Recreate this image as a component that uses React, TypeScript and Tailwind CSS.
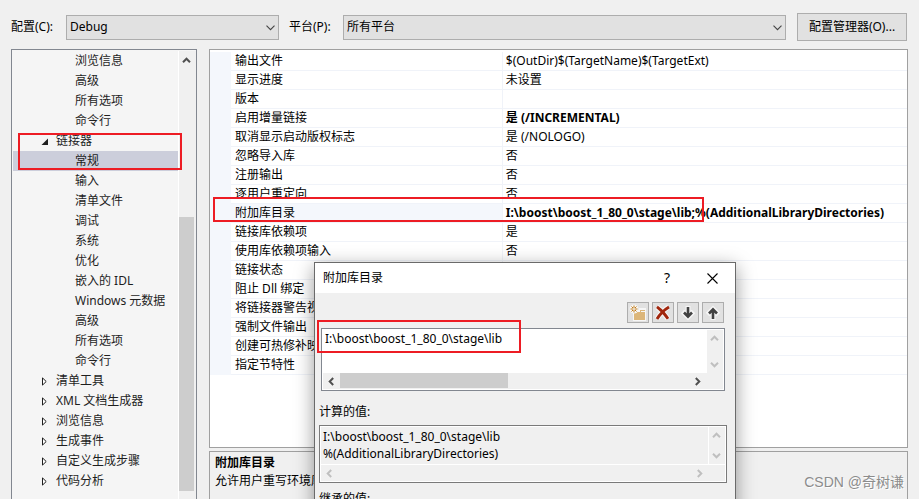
import React, { useState } from 'react';

type TreeNode = { label: string; level: 1 | 2; open?: boolean; selected?: boolean };

type Property = { name: string; value: string; changed?: boolean; selected?: boolean };

const treeNodes: TreeNode[] = [
  { label: '浏览信息', level: 2 },
  { label: '高级', level: 2 },
  { label: '所有选项', level: 2 },
  { label: '命令行', level: 2 },
  { label: '链接器', level: 1, open: true },
  { label: '常规', level: 2, selected: true },
  { label: '输入', level: 2 },
  { label: '清单文件', level: 2 },
  { label: '调试', level: 2 },
  { label: '系统', level: 2 },
  { label: '优化', level: 2 },
  { label: '嵌入的 IDL', level: 2 },
  { label: 'Windows 元数据', level: 2 },
  { label: '高级', level: 2 },
  { label: '所有选项', level: 2 },
  { label: '命令行', level: 2 },
  { label: '清单工具', level: 1 },
  { label: 'XML 文档生成器', level: 1 },
  { label: '浏览信息', level: 1 },
  { label: '生成事件', level: 1 },
  { label: '自定义生成步骤', level: 1 },
  { label: '代码分析', level: 1 },
];

const properties: Property[] = [
  { name: '输出文件', value: '$(OutDir)$(TargetName)$(TargetExt)' },
  { name: '显示进度', value: '未设置' },
  { name: '版本', value: '' },
  { name: '启用增量链接', value: '是 (/INCREMENTAL)', changed: true },
  { name: '取消显示启动版权标志', value: '是 (/NOLOGO)' },
  { name: '忽略导入库', value: '否' },
  { name: '注册输出', value: '否' },
  { name: '逐用户重定向', value: '否' },
  {
    name: '附加库目录',
    value: 'I:\\boost\\boost_1_80_0\\stage\\lib;%(AdditionalLibraryDirectories)',
    changed: true,
    selected: true,
  },
  { name: '链接库依赖项', value: '是' },
  { name: '使用库依赖项输入', value: '否' },
  { name: '链接状态', value: '' },
  { name: '阻止 Dll 绑定', value: '' },
  { name: '将链接器警告视为错误', value: '' },
  { name: '强制文件输出', value: '' },
  { name: '创建可热修补映像', value: '' },
  { name: '指定节特性', value: '' },
];

const turns = {
  up: '',
  down: 'rotate-180',
  left: '-rotate-90',
  right: 'rotate-90',
};

const ScrollArrow: React.FC<{ dir: keyof typeof turns; label: string; dim?: boolean; className?: string }> = ({
  dir,
  label,
  dim,
  className = '',
}) => (
  <button
    type="button"
    aria-label={label}
    className={`flex shrink-0 items-center justify-center ${dim ? 'text-[#bfbfbf]' : 'text-[#505050]'} ${className}`}
  >
    <svg width="9" height="9" viewBox="0 0 9 9" className={turns[dir]}>
      <path d="M1 6.2 4.5 2.7 8 6.2" fill="none" stroke="currentColor" strokeWidth="2" />
    </svg>
  </button>
);

const SelectBox: React.FC<{ id: string; value: string; className: string }> = ({ id, value, className }) => (
  <div className={`relative ${className}`}>
    <select
      id={id}
      defaultValue={value}
      className="h-[25px] w-full appearance-none border border-[#adadad] bg-[#e1e1e1] pr-6 pl-[3px] outline-none"
    >
      <option>{value}</option>
    </select>
    <svg width="9" height="6" viewBox="0 0 9 6" className="pointer-events-none absolute top-[10px] right-1">
      <path d="M.5.7 4.5 4.7 8.5.7" fill="none" stroke="#444" strokeWidth="1.1" />
    </svg>
  </div>
);

// Red frame that calls attention to a part of the window
const Marker: React.FC<{ className: string }> = ({ className }) => (
  <div className={`pointer-events-none absolute border-2 border-[#ed1c24] ${className}`}></div>
);

const ConfigTree: React.FC = () => (
  <div className="relative w-[186px] shrink-0 self-start border border-[#828790] bg-[#f5f5f5] p-px pr-0 text-[#1e1e1e]">
    <div className="flex">
      <ul role="tree" className="flex-1 pb-5">
        {treeNodes.map((node, i) => (
          <li
            key={i}
            role="treeitem"
            aria-selected={!!node.selected}
            className={`flex h-5 items-center whitespace-nowrap ${node.level === 1 ? 'pl-7' : 'pl-[62px]'} ${
              node.selected ? 'bg-[#cccedb]' : ''
            }`}
          >
            {node.level === 1 && (
              <svg width="8" height="9" viewBox="0 0 8 9" className="mr-[7px] shrink-0">
                {node.open ? (
                  <path d="M7 1.5V8H.5z" fill="#1e1e1e" />
                ) : (
                  <path d="M1.5.9V8.1L5.2 4.5z" fill="#fff" stroke="#1e1e1e" />
                )}
              </svg>
            )}
            {node.label}
          </li>
        ))}
      </ul>
      <div className="flex w-[18px] flex-col border-l border-white bg-[#f0f0f0]">
        <ScrollArrow dir="up" label="向上滚动" className="h-[18px] w-[15px]" />
        <div className="mt-[148px] w-[15px] flex-1 bg-[#cdcdcd]"></div>
        <ScrollArrow dir="down" label="向下滚动" className="h-5 w-[15px]" />
      </div>
    </div>
    <Marker className="top-[83px] right-[14px] left-[6px] h-[37px]" />
  </div>
);

const PropertyGrid: React.FC = () => (
  <div className="relative h-[399px] border border-[#a0a0a0] bg-white pt-0.5">
    <table className="w-full table-fixed border-separate border-spacing-0">
      <colgroup>
        <col className="w-[21px]" />
        <col className="w-[39%]" />
        <col />
      </colgroup>
      <tbody>
        {properties.map(p => (
          <tr key={p.name} className="h-[19px]">
            <td className="bg-[#f4f7fc] p-0"></td>
            <td
              className={`border-r border-b border-[#f0f3f9] p-0 pl-1 leading-[18px] whitespace-nowrap ${
                p.selected ? 'bg-[#f4f7fc]' : ''
              }`}
            >
              {p.name}
            </td>
            <td
              className={`border-b border-[#f0f3f9] p-0 pl-[3px] leading-[18px] whitespace-nowrap ${
                p.changed ? 'font-bold' : ''
              }`}
            >
              {p.value}
            </td>
          </tr>
        ))}
      </tbody>
    </table>
    <Marker className="top-[147px] right-[203px] left-[3px] h-[25px]" />
  </div>
);

const toolClass = 'flex h-[21px] w-[22px] items-center justify-center border border-[#adadad] bg-[#e1e1e1]';

const DirectoriesDialog: React.FC = () => {
  const [paths, setPaths] = useState('I:\\boost\\boost_1_80_0\\stage\\lib');

  return (
    <div
      role="dialog"
      aria-labelledby="dialog-title"
      className="absolute top-[262px] left-[314px] h-[420px] w-[422px] border border-[#6a6a6a] bg-[#f0f0f0] shadow-[0_5px_18px_rgba(0,0,0,0.4)]"
    >
      <div className="flex h-[30px] items-center bg-white pr-[17px] pl-2">
        <h2 id="dialog-title" className="flex-1">附加库目录</h2>
        <button type="button" aria-label="帮助" className="mr-[37px] text-sm">?</button>
        <button type="button" aria-label="关闭">
          <svg width="11" height="11" viewBox="0 0 11 11">
            <path d="M.5.5 10.5 10.5M10.5.5.5 10.5" stroke="#000" strokeWidth="1.1" />
          </svg>
        </button>
      </div>

      <div className="flex justify-end gap-[3px] pt-[9px] pr-[11px]">
        <button type="button" aria-label="新行" className={toolClass}>
          <svg width="18" height="17" viewBox="0 0 18 17">
            <path d="M4 6h6V4h7v13H4z" fill="#f6f6f6" />
            <path d="M5 8h6V6h5v1h-4v1h4v8H5z" fill="#dcb67a" />
            <circle cx="5" cy="5" r="4.500" fill="#f6f6f6" />
            <path d="M5 1.500v7M1.500 5h7M2.500 2.500l5 5M7.500 2.500l-5 5" stroke="#c27d1a" />
            <circle cx="5" cy="5" r="1" fill="#f6f6f6" />
          </svg>
        </button>
        <button type="button" aria-label="删除" className={toolClass}>
          <svg width="16" height="16" viewBox="0 0 16 16">
            <path d="M2 2c4 3 8 7 11 12M13.500 2C9 5 5 9 2 14" fill="none" stroke="#f6f6f6" strokeWidth="5" />
            <path d="M2 1.800c4 3 8 7 11 12M14 2C9 5 5 9 2 14" fill="none" stroke="#a1260d" strokeWidth="2.800" />
          </svg>
        </button>
        <button type="button" aria-label="下移" className={toolClass}>
          <svg width="16" height="16" viewBox="0 0 16 16">
            <path d="M8 1v11M2.500 6.500 8 12l5.500-5.500" fill="none" stroke="#f6f6f6" strokeWidth="5" />
            <path d="M8 2v10M4 7.500l4 4.200 4-4.200" fill="none" stroke="#424242" strokeWidth="2.600" />
          </svg>
        </button>
        <button type="button" aria-label="上移" className={toolClass}>
          <svg width="16" height="16" viewBox="0 0 16 16">
            <path d="M8 15V4M2.500 9.500 8 4l5.500 5.500" fill="none" stroke="#f6f6f6" strokeWidth="5" />
            <path d="M8 14V4M4 8.500l4-4.200 4 4.200" fill="none" stroke="#424242" strokeWidth="2.600" />
          </svg>
        </button>
      </div>

      <div className="relative mt-[5px] mr-[10px] ml-[6px] border border-[#828790] bg-white p-px">
        <div className="flex h-[43px]">
          <textarea
            aria-label="附加库目录"
            value={paths}
            onChange={e => setPaths(e.target.value)}
            className="flex-1 resize-none overflow-hidden pl-0.5 leading-[18px] whitespace-pre outline-none"
          />
          <div className="flex w-4 flex-col justify-between bg-[#f0f0f0]">
            <ScrollArrow dir="up" label="向上滚动" dim className="h-[17px] w-[15px]" />
            <ScrollArrow dir="down" label="向下滚动" dim className="h-[17px] w-[15px]" />
          </div>
        </div>
        <div className="flex h-4 items-stretch bg-[#f0f0f0] pr-[17px]">
          <ScrollArrow dir="left" label="向左滚动" className="w-[17px]" />
          <div className="flex-1">
            <div className="h-[15px] w-[48%] bg-[#cdcdcd]"></div>
          </div>
          <ScrollArrow dir="right" label="向右滚动" className="w-[17px]" />
        </div>
        <Marker className="-top-[9px] -left-[5px] h-[33px] w-[204px]" />
      </div>

      <label htmlFor="evaluated" className="mt-3 ml-1 block leading-[18px]">计算的值:</label>
      <div className="mt-1 mr-2 ml-1 border border-[#7a7a7a] bg-white p-px">
        <div className="flex h-[37px] gap-px">
          <textarea
            id="evaluated"
            readOnly
            value={'I:\\boost\\boost_1_80_0\\stage\\lib\n%(AdditionalLibraryDirectories)'}
            className="flex-1 resize-none overflow-hidden bg-[#f0f0f0] pt-px pl-0.5 leading-[17px] whitespace-pre outline-none"
          />
          <div className="flex w-4 flex-col justify-between bg-[#f0f0f0]">
            <ScrollArrow dir="up" label="向上滚动" dim className="h-[17px] w-[15px]" />
            <ScrollArrow dir="down" label="向下滚动" dim className="h-[17px] w-[15px]" />
          </div>
        </div>
        <div className="mt-px flex h-4 justify-between bg-[#f0f0f0] pr-[17px]">
          <ScrollArrow dir="left" label="向左滚动" dim className="w-[17px]" />
          <ScrollArrow dir="right" label="向右滚动" dim className="w-[17px]" />
        </div>
      </div>

      <p className="mt-[7px] ml-1 leading-[18px]">继承的值:</p>
    </div>
  );
};

export default function App() {
  return (
    <div className="relative h-screen overflow-hidden bg-[#f0f0f0] pr-[11px] pl-[11px] font-['Noto_Sans','Noto_Sans_CJK_SC',sans-serif] text-[12px] text-black">
      <div className="flex items-center pt-[13px] pr-px">
        <label htmlFor="config" className="w-[55px] whitespace-nowrap">配置(C):</label>
        <SelectBox id="config" value="Debug" className="w-[213px]" />
        <label htmlFor="platform" className="ml-[10px] w-[54px] whitespace-nowrap">平台(P):</label>
        <SelectBox id="platform" value="所有平台" className="flex-1" />
        <button type="button" className="ml-[11px] h-7 w-[110px] border border-[#adadad] bg-[#e1e1e1]">
          配置管理器(O)...
        </button>
      </div>

      <div className="mt-2 flex gap-3">
        <ConfigTree />
        <div className="min-w-0 flex-1">
          <PropertyGrid />
          <div className="mt-[3px] h-20 border border-[#a0a0a0] px-[5px] pt-[2px] leading-[18px]">
            <h2 className="font-bold">附加库目录</h2>
            <p className="truncate">允许用户重写环境库路径。</p>
          </div>
        </div>
      </div>

      <DirectoriesDialog />

      <div className="absolute right-[15px] bottom-[6px] font-['Liberation_Sans','Noto_Sans_CJK_SC',sans-serif] text-[14px] leading-[22px] text-[#8c8c8c] [text-shadow:1px_1px_0_#fff]">
        CSDN @奇树谦
      </div>
    </div>
  );
}
